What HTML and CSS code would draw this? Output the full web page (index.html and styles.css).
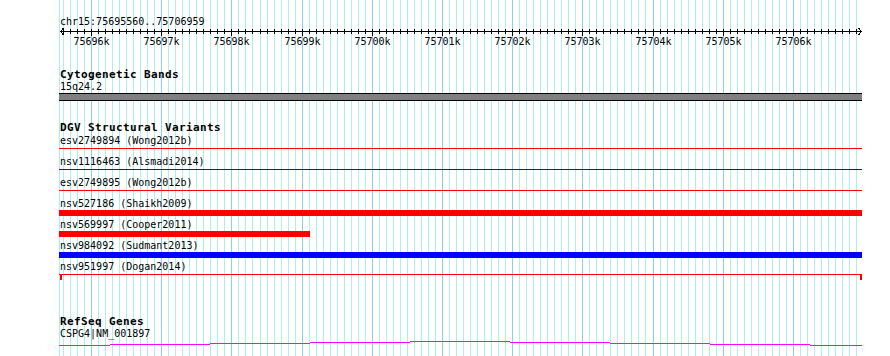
FILE: index.html
```html
<!DOCTYPE html>
<html lang="en">
<head>
  <meta charset="UTF-8">
  <title>chr15:75695560..75706959</title>
  <link rel="stylesheet" href="styles.css">
</head>
<body>
  <div class="panel">
    <svg class="grid" id="grid" width="890" height="356"></svg>

    <div class="tracks">
      <div class="ruler">
        <div class="segment">chr15:75695560..75706959</div>
      </div>

      <section class="track track-cyto">
        <h2 class="track-title">Cytogenetic Bands</h2>
        <div class="label">15q24.2</div>
        <div class="band"></div>
      </section>

      <section class="track track-dgv">
        <h2 class="track-title">DGV Structural Variants</h2>
        <div class="feature">
          <div class="label">esv2749894 (Wong2012b)</div>
          <div class="glyph"><div class="thin red"></div></div>
        </div>
        <div class="feature">
          <div class="label">nsv1116463 (Alsmadi2014)</div>
          <div class="glyph"><div class="thin purple"></div></div>
        </div>
        <div class="feature">
          <div class="label">esv2749895 (Wong2012b)</div>
          <div class="glyph"><div class="thin red"></div></div>
        </div>
        <div class="feature">
          <div class="label">nsv527186 (Shaikh2009)</div>
          <div class="glyph"><div class="bar red"></div></div>
        </div>
        <div class="feature">
          <div class="label">nsv569997 (Cooper2011)</div>
          <div class="glyph"><div class="bar red" style="width: 251px"></div></div>
        </div>
        <div class="feature">
          <div class="label">nsv984092 (Sudmant2013)</div>
          <div class="glyph"><div class="bar blue"></div></div>
        </div>
        <div class="feature">
          <div class="label">nsv951997 (Dogan2014)</div>
          <div class="glyph capped"><div class="thin red"></div></div>
        </div>
      </section>

      <section class="track track-refseq">
        <h2 class="track-title">RefSeq Genes</h2>
        <div class="label label-gene">CSPG4|NM_001897</div>
        <!-- intron hat, peak near the middle of the view -->
        <svg class="gene" width="803" height="8">
          <path d="M0,6.5H51 M51,5.5H151 M151,4.5H251 M251,3.5H351 M351,2.5H451 M451,3.5H551 M551,4.5H651 M651,5.5H751 M751,6.5H803" />
        </svg>
      </section>
    </div>
  </div>

  <script src="grid.js"></script>
</body>
</html>
```

FILE: styles.css
```css
* {
  box-sizing: border-box;
  margin: 0;
  padding: 0;
}

body {
  background: #fff;
}

.panel {
  position: relative;
  width: 890px;
  height: 356px;
  overflow: hidden;
  font-family: "DejaVu Sans Mono", "Liberation Mono", monospace;
  font-size: 10px;
  color: #000;
}

.grid {
  position: absolute;
  top: 0;
  left: 0;
  shape-rendering: crispEdges;
}

.grid .minor { stroke: #afeeee; }
.grid .major { stroke: #87cefa; }
.grid .axis { stroke: #000; }
.grid text {
  font-family: "DejaVu Sans Mono", "Liberation Mono", monospace;
  font-size: 10px;
  fill: #000;
}

.tracks {
  position: relative;
  width: 862px;
  padding-left: 59px;
}

.ruler {
  height: 48px;
}

.segment {
  padding-top: 16px;
  padding-left: 1px;
  line-height: 11px;
}

.track-title {
  font-size: 11px;
  font-weight: bold;
  letter-spacing: 0.38px;
  line-height: 12px;
  padding-left: 1px;
}

.label {
  line-height: 11px;
  padding-left: 1px;
  white-space: nowrap;
}

.track-cyto {
  margin-top: 21px;
}

.band {
  height: 8px;
  margin-top: 1px;
  background: #808080;
  border-top: 1px solid #000;
  border-bottom: 1px solid #000;
}

.track-dgv {
  margin-top: 21px;
}

.track-dgv .track-title {
  margin-bottom: 2px;
}

.feature {
  height: 21px;
}

.feature .label {
  line-height: 10px;
}

.glyph {
  position: relative;
  height: 6px;
  margin-top: 1px;
}

.thin {
  height: 1px;
  margin-top: 2px;
}

.bar {
  height: 6px;
}

.red { background: #f00; }
.blue { background: #00f; }
.purple { background: #4b0082; }

.capped::before,
.capped::after {
  content: "";
  position: absolute;
  top: 0;
  width: 2px;
  height: 6px;
  background: #f00;
}

.capped::before { left: 1px; }
.capped::after { right: 0; }

.track-refseq {
  margin-top: 33px;
}

.gene {
  display: block;
  shape-rendering: crispEdges;
}

.gene path {
  fill: none;
  stroke: #f0f;
  stroke-width: 1;
}
```

FILE: grid.js
```js
// vertical guide lines every 100 bp, darker every kb, plus the ruler axis
var NS = 'http://www.w3.org/2000/svg';
var svg = document.getElementById('grid');

var FIRST = 75695600;   // first 100 bp mark in view
var X0 = 63;            // its x position
var STEP = 7.018;       // px per 100 bp

function add(tag, attrs, text) {
  var el = document.createElementNS(NS, tag);
  for (var k in attrs) el.setAttribute(k, attrs[k]);
  if (text) el.textContent = text;
  svg.appendChild(el);
  return el;
}

function xAt(i) {
  return Math.round(X0 + STEP * i) + 0.5;
}

add('line', { x1: 59.5, y1: 0, x2: 59.5, y2: 356, 'class': 'minor' });

for (var i = 0; i <= 113; i++) {
  var bp = FIRST + i * 100;
  var major = bp % 1000 === 0;
  add('line', { x1: xAt(i), y1: 0, x2: xAt(i), y2: 356, 'class': major ? 'major' : 'minor' });
}

// axis with arrow heads
add('line', { x1: 60, y1: 31.5, x2: 862, y2: 31.5, 'class': 'axis' });
add('polyline', { points: '63.5,28 60.5,31.5 63.5,35', fill: 'none', 'class': 'axis' });
add('polyline', { points: '858.5,28 861.5,31.5 858.5,35', fill: 'none', 'class': 'axis' });

for (var j = 0; j <= 113; j++) {
  var pos = FIRST + j * 100;
  var big = pos % 1000 === 0;
  var x = xAt(j);
  add('line', { x1: x, y1: 29, x2: x, y2: big ? 36 : 34, 'class': 'axis' });
  if (big) {
    add('text', { x: x, y: 45, 'text-anchor': 'middle' }, (pos / 1000) + 'k');
  }
}
```
